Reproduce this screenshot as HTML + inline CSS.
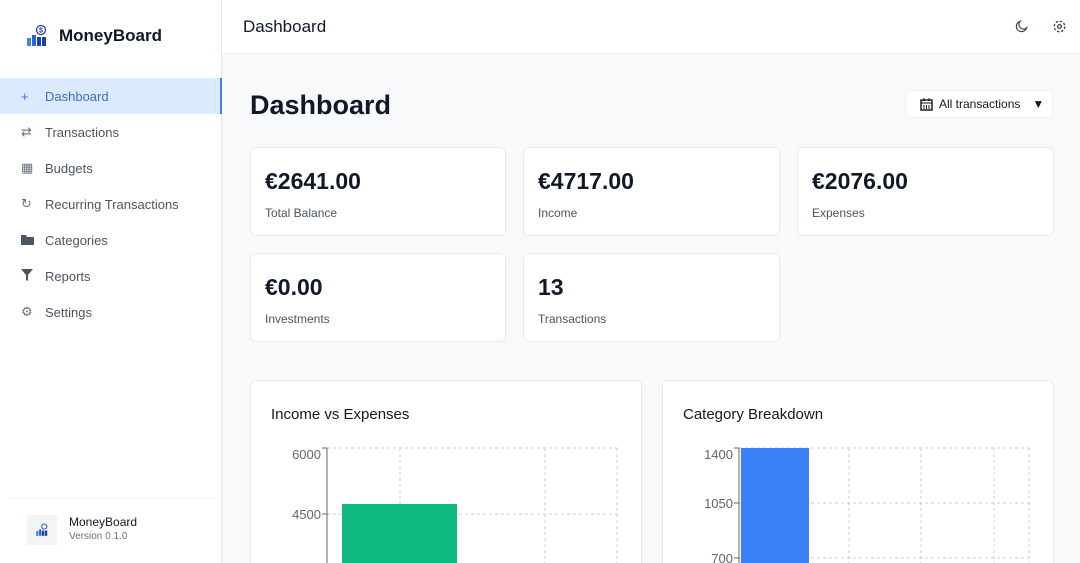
<!DOCTYPE html><html style="width:1080px;height:563px;overflow:hidden"><head><style>
*{box-sizing:border-box;margin:0;padding:0}
body{width:1080px;height:563px;overflow:hidden;font-family:"Liberation Sans","DejaVu Sans",sans-serif;background:#f8f9fb;position:relative;color:#111827}
.side{position:absolute;left:0;top:0;width:222px;height:563px;background:#fff;border-right:1px solid #e5e7eb}
.logo{position:absolute;left:25px;top:24px;display:flex;align-items:center;gap:10px;font-weight:bold;font-size:17px}
.nav{position:absolute;top:78px;left:0;width:222px}
.nav div{height:36px;display:flex;align-items:center;padding-left:21px;font-size:13px;color:#4b5563}
.nav div span.i{width:24px;color:#6b7280;font-size:13px}
.nav .act{background:#dbeafe;color:#3b6fd6;border-right:2px solid #3b82f6}
.nav .act span.i{color:#3b6fd6}
.foot{position:absolute;left:8px;right:8px;top:498px;border-top:1px solid #eef0f3;padding:16px 0 0 19px;display:flex;gap:12px}
.fi{width:30px;height:30px;background:#f3f4f6;display:flex;align-items:center;justify-content:center}
.top{position:absolute;left:222px;top:0;right:0;height:54px;background:#fff;border-bottom:1px solid #eef0f3}
.top h2{position:absolute;left:21px;top:17px;font-size:17px;font-weight:normal}
h1{position:absolute;left:250px;top:90px;font-size:27px;font-weight:bold}
.btn{position:absolute;left:905px;top:90px;width:148px;height:28px;background:#fff;border:1px solid #eef0f3;border-radius:5px;font-size:12px;display:flex;align-items:center;padding-left:14px;gap:6px}
.card{position:absolute;background:#fff;border:1px solid #e8eaee;border-radius:6px;overflow:hidden}
.card b{position:absolute;left:14px;top:20px;font-size:23px}
.card span{position:absolute;left:14px;top:58px;font-size:12px;color:#4b5563}
.ct{position:absolute;left:20px;top:25px;font-size:15px}
</style></head><body>
<div class="side">
<div class="logo"><svg width="24" height="24" viewBox="0 0 24 24"><rect x="2" y="14" width="4" height="8" fill="#3b82f6"/><rect x="7" y="11" width="4" height="11" fill="#2563eb"/><rect x="12" y="13" width="4" height="9" fill="#1e40af"/><rect x="17" y="13" width="4" height="9" fill="#1e40af"/><circle cx="16" cy="6" r="4.5" fill="none" stroke="#1e40af" stroke-width="1.3"/><text x="16" y="8.5" font-size="7" text-anchor="middle" fill="#1e40af">$</text></svg>MoneyBoard</div>
<div class="nav">
<div class="act"><span class="i">+</span>Dashboard</div>
<div><span class="i">⇄</span>Transactions</div>
<div><span class="i">▦</span>Budgets</div>
<div><span class="i">↻</span>Recurring Transactions</div>
<div><span class="i"><svg width="13" height="11"><path d="M0 1h5l1 2h7v8H0z" fill="#4b5563"/></svg></span>Categories</div>
<div><span class="i"><svg width="12" height="12"><path d="M0 0h12L7 6v6L5 11V6z" fill="#4b5563"/></svg></span>Reports</div>
<div><span class="i">⚙</span>Settings</div>
</div>
<div class="foot"><div class="fi"><svg width="14" height="14" viewBox="0 0 24 24"><rect x="2" y="14" width="4" height="8" fill="#3b82f6"/><rect x="7" y="11" width="4" height="11" fill="#2563eb"/><rect x="12" y="13" width="4" height="9" fill="#1e40af"/><rect x="17" y="13" width="4" height="9" fill="#1e40af"/><circle cx="16" cy="6" r="4.5" fill="none" stroke="#1e40af" stroke-width="1.5"/></svg></div><div><div style="font-size:12px">MoneyBoard</div><div style="font-size:10px;color:#6b7280;margin-top:2px">Version 0.1.0</div></div></div>
</div>
<div class="top"><h2>Dashboard</h2>
<svg style="position:absolute;left:793px;top:19px" width="14" height="14" viewBox="0 0 24 24"><path d="M20 15A9 9 0 1 1 9 4a7 7 0 0 0 11 11z" fill="none" stroke="#374151" stroke-width="2"/></svg>
<svg style="position:absolute;left:830px;top:19px" width="15" height="15" viewBox="0 0 24 24"><circle cx="12" cy="12" r="3" fill="none" stroke="#374151" stroke-width="2"/><circle cx="12" cy="12" r="8.5" fill="none" stroke="#374151" stroke-width="2" stroke-dasharray="4 2.7"/></svg>
</div>
<h1>Dashboard</h1>
<div class="btn"><svg width="13" height="13" viewBox="0 0 13 13"><rect x="1" y="2" width="11" height="10" fill="none" stroke="#111" stroke-width="1.4"/><path d="M1 5h11M4 0v3M9 0v3M4 7v4M6.5 7v4M9 7v4" stroke="#111"/></svg>All transactions <span style="margin-left:6px">▼</span></div>
<div class="card" style="left:250px;top:147px;width:256px;height:89px"><b>€2641.00</b><span>Total Balance</span></div>
<div class="card" style="left:523px;top:147px;width:257px;height:89px"><b>€4717.00</b><span>Income</span></div>
<div class="card" style="left:797px;top:147px;width:257px;height:89px"><b>€2076.00</b><span>Expenses</span></div>
<div class="card" style="left:250px;top:253px;width:256px;height:89px"><b>€0.00</b><span>Investments</span></div>
<div class="card" style="left:523px;top:253px;width:257px;height:89px"><b>13</b><span>Transactions</span></div>
<div class="card" style="left:250px;top:380px;width:392px;height:183px;border-bottom:none;border-radius:6px 6px 0 0"><div class="ct">Income vs Expenses</div>
<svg style="position:absolute;left:0;top:0" width="392" height="200"><g stroke="#ccc" stroke-dasharray="3 3" fill="none"><path d="M76 67H366M76 133H366M149 67V200M294 67V200M366 67V200"/></g><rect x="91" y="123" width="115" height="80" fill="#10b981"/><path d="M76 67V200M71 67H76M71 133H76" stroke="#666"/><g font-size="13" fill="#666" text-anchor="end"><text x="70" y="78">6000</text><text x="70" y="138">4500</text></g></svg></div>
<div class="card" style="left:662px;top:380px;width:392px;height:183px;border-bottom:none;border-radius:6px 6px 0 0"><div class="ct">Category Breakdown</div>
<svg style="position:absolute;left:0;top:0" width="392" height="200"><g stroke="#ccc" stroke-dasharray="3 3" fill="none"><path d="M76 67H366M76 122H366M76 177H366M186 67V200M258 67V200M331 67V200M366 67V200"/></g><rect x="78" y="67" width="68" height="140" fill="#3b82f6"/><path d="M76 67V200M71 67H76M71 122H76M71 177H76" stroke="#666"/><g font-size="13" fill="#666" text-anchor="end"><text x="70" y="78">1400</text><text x="70" y="127">1050</text><text x="70" y="182">700</text></g></svg></div>
</body></html>
